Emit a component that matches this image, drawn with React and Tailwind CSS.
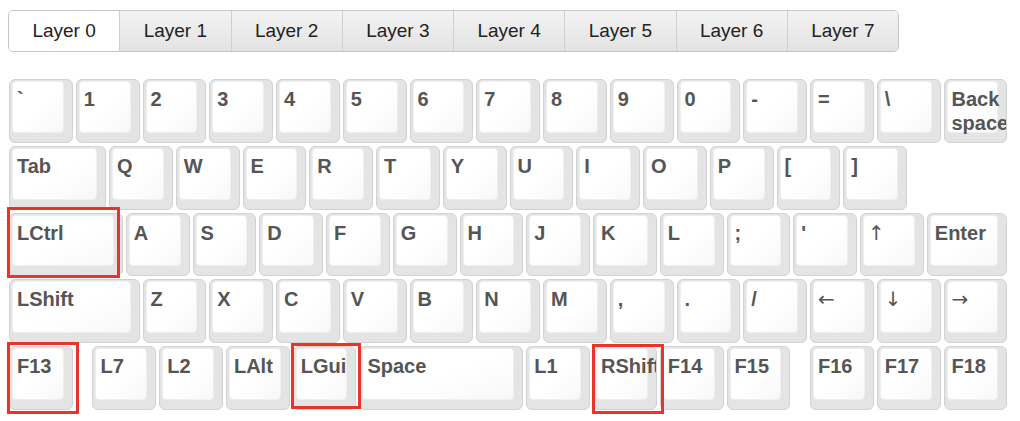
import React from 'react';

const W = {
  0.25: 'w-[16.7px]',
  1: 'w-[66.75px]',
  1.25: 'w-[83.4px]',
  1.5: 'w-[100.1px]',
  1.75: 'w-[116.8px]',
  2: 'w-[133.5px]',
  2.5: 'w-[166.9px]',
};

// red boxes drawn round the keys that were picked
const MARK_CTRL = '-left-[2px] -top-[6px] h-[71px] w-[113px]';
const MARK_F13 = '-left-[2px] -top-[4px] h-[72px] w-[72px]';
const MARK_GUI = '-left-[2px] -top-[3px] h-[66px] w-[70px]';
const MARK_SHIFT = '-left-[1px] -top-[2px] h-[70px] w-[72px]';

const rows = [
  [['`'], ['1'], ['2'], ['3'], ['4'], ['5'], ['6'], ['7'], ['8'], ['9'], ['0'], ['-'], ['='], ['\\'], ['Back\nspace']],
  [['Tab', 1.5], ['Q'], ['W'], ['E'], ['R'], ['T'], ['Y'], ['U'], ['I'], ['O'], ['P'], ['['], [']']],
  [['LCtrl', 1.75, MARK_CTRL], ['A'], ['S'], ['D'], ['F'], ['G'], ['H'], ['J'], ['K'], ['L'], [';'], ["'"], ['↑'], ['Enter', 1.25]],
  [['LShift', 2], ['Z'], ['X'], ['C'], ['V'], ['B'], ['N'], ['M'], [','], ['.'], ['/'], ['←'], ['↓'], ['→']],
  [
    ['F13', 1, MARK_F13], [null, 0.25], ['L7'], ['L2'], ['LAlt'], ['LGui', 1, MARK_GUI], ['Space', 2.5], ['L1'],
    ['RShift', 1, MARK_SHIFT], ['F14'], ['F15'], [null, 0.25], ['F16'], ['F17'], ['F18'],
  ],
];

const arrows = ['←', '↑', '→', '↓'];

function Key({ label, w = 1, mark }) {
  if (label === null) return <div className={`${W[w]} shrink-0`} />;
  const thin = arrows.includes(label);
  return (
    <div className={`${W[w]} relative h-full shrink-0 pr-[3px] pb-[3px]`}>
      <div className="h-full overflow-hidden rounded-[6px] border border-[#d2d2d2] bg-[#e4e4e4] pl-[2px] pt-[1px] pr-[8px] pb-[9px]">
        <div className="h-full rounded-[4px] border border-[#efefef] bg-gradient-to-br from-white via-white to-[#f8f8f8]">
          <div
            className={`whitespace-pre pl-[4px] pt-[5px] text-[20px] leading-[24px] text-[#555] ${
              thin ? 'font-normal font-["DejaVu_Sans",sans-serif] text-[18px]' : 'font-bold'
            }`}
          >
            {label}
          </div>
        </div>
      </div>
      {mark && <div className={`pointer-events-none absolute z-10 border-[3px] border-[#e8352a] ${mark}`} />}
    </div>
  );
}

export default function App() {
  const layers = [0, 1, 2, 3, 4, 5, 6, 7];
  return (
    <div className="h-[421px] w-[1020px] overflow-hidden bg-white pl-[8px] pt-[10px] font-['Liberation_Sans',Arial,sans-serif]">
      <div className="flex h-[42px] w-[891px] overflow-hidden rounded-[5px] border border-[#c6c6c6]">
        {layers.map((n) => (
          <div
            key={n}
            className={`flex flex-1 items-center justify-center text-[19px] text-[#222] ${
              n > 0 ? 'border-l border-[#cfcfcf] bg-gradient-to-b from-[#f3f3f3] to-[#e3e3e3]' : 'bg-white'
            }`}
          >
            Layer {n}
          </div>
        ))}
      </div>

      <div className="ml-[1px] mt-[27px] flex flex-col">
        {rows.map((row, i) => (
          <div key={i} className="flex h-[66.75px]">
            {row.map(([label, w, mark], j) => (
              <Key key={j} label={label} w={w || 1} mark={mark} />
            ))}
          </div>
        ))}
      </div>
    </div>
  );
}
